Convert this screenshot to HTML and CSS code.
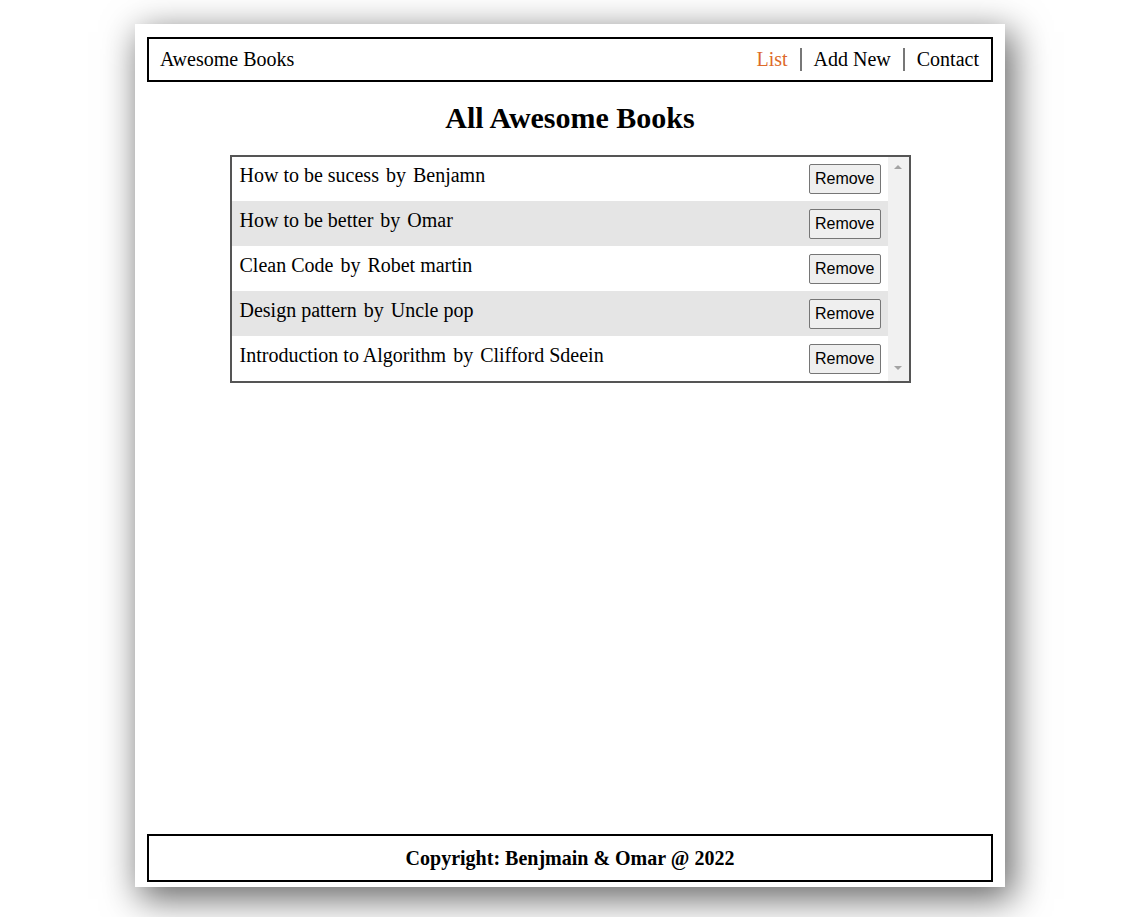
FILE: index.html
```html
<!DOCTYPE html>
<html lang="en">
<head>
    <meta charset="UTF-8">
    <meta name="viewport" content="width=device-width, initial-scale=1.0">
    <title>Awesome Books</title>
    <link rel="stylesheet" href="styles.css">
</head>
<body>
    <div class="container">
        <header class="navbar">
            <span class="brand">Awesome Books</span>
            <ul class="nav-links">
                <li class="active">List</li>
                <li>Add New</li>
                <li>Contact</li>
            </ul>
        </header>

        <h1>All Awesome Books</h1>

        <div class="book-list">
            <div class="books">
                <div class="book-row">
                    <div class="book-info"><span>How to be sucess</span><span>by</span><span>Benjamn</span></div>
                    <button class="remove-btn">Remove</button>
                </div>
                <div class="book-row">
                    <div class="book-info"><span>How to be better</span><span>by</span><span>Omar</span></div>
                    <button class="remove-btn">Remove</button>
                </div>
                <div class="book-row">
                    <div class="book-info"><span>Clean Code</span><span>by</span><span>Robet martin</span></div>
                    <button class="remove-btn">Remove</button>
                </div>
                <div class="book-row">
                    <div class="book-info"><span>Design pattern</span><span>by</span><span>Uncle pop</span></div>
                    <button class="remove-btn">Remove</button>
                </div>
                <div class="book-row">
                    <div class="book-info"><span>Introduction to Algorithm</span><span>by</span><span>Clifford Sdeein</span></div>
                    <button class="remove-btn">Remove</button>
                </div>
            </div>
            <!-- scrollbar track -->
            <div class="scroll-track">
                <span class="arrow-up"></span>
                <span class="arrow-down"></span>
            </div>
        </div>

        <footer class="footer">Copyright: Benjmain &amp; Omar @ 2022</footer>
    </div>
</body>
</html>
```

FILE: styles.css
```css
body {
    font-family: 'Liberation Serif', 'Times New Roman', serif;
    margin: 0;
    padding: 24px 6px 30px 0;
    background-color: white;
    color: #000;
}
.container {
    width: 870px;
    height: 863px;
    box-sizing: border-box;
    margin: 0 auto;
    padding: 13px 12px 5px;
    display: flex;
    flex-direction: column;
    background-color: white;
    box-shadow: 6px 10px 34px 2px rgba(0,0,0,0.6);
}
.navbar {
    display: flex;
    align-items: center;
    justify-content: space-between;
    height: 45px;
    box-sizing: border-box;
    border: 2px solid #000;
    padding: 0 0 0 11px;
    font-size: 20px;
}
.nav-links {
    display: flex;
    list-style: none;
    margin: 0;
    padding: 0;
}
.nav-links li {
    padding: 0 12px;
    line-height: 23px;
}
.nav-links li + li {
    border-left: 2px solid #777;
}
.nav-links .active {
    color: #dd6a2a;
}
h1 {
    text-align: center;
    font-size: 30px;
    margin: 19px 0 20px;
    line-height: 34px;
}
.book-list {
    display: flex;
    width: 681px;
    height: 228px;
    box-sizing: border-box;
    margin: 0 auto;
    border: 2px solid #555;
}
.books {
    flex: 1;
    overflow: hidden;
}
.book-row {
    display: flex;
    justify-content: space-between;
    align-items: flex-start;
    height: 45px;
    box-sizing: border-box;
    padding: 8px 7px 7px 8px;
    font-size: 20px;
}
.book-row:first-child {
    height: 44px;
    padding-top: 7px;
}
.book-row:nth-child(even) {
    background-color: #e5e5e5;
}
.book-info {
    display: flex;
    gap: 7px;
    line-height: 23px;
}
.remove-btn {
    font-family: 'Liberation Sans', Arial, sans-serif;
    font-size: 16px;
    height: 30px;
    padding: 0 5px;
    background-color: #efefef;
    color: #000;
    border: 1px solid #767676;
    border-radius: 2px;
}
.scroll-track {
    width: 21px;
    background-color: #f1f1f1;
    display: flex;
    flex-direction: column;
    justify-content: space-between;
    align-items: center;
    padding: 8px 0 11px;
    box-sizing: border-box;
}
.arrow-up {
    width: 0;
    height: 0;
    border-left: 4px solid transparent;
    border-right: 4px solid transparent;
    border-bottom: 4px solid #a3a3a3;
}
.arrow-down {
    width: 0;
    height: 0;
    border-left: 4px solid transparent;
    border-right: 4px solid transparent;
    border-top: 4px solid #a3a3a3;
}
.footer {
    margin-top: auto;
    height: 48px;
    box-sizing: border-box;
    border: 2px solid #000;
    display: flex;
    align-items: center;
    justify-content: center;
    font-size: 20px;
    font-weight: bold;
}
```
